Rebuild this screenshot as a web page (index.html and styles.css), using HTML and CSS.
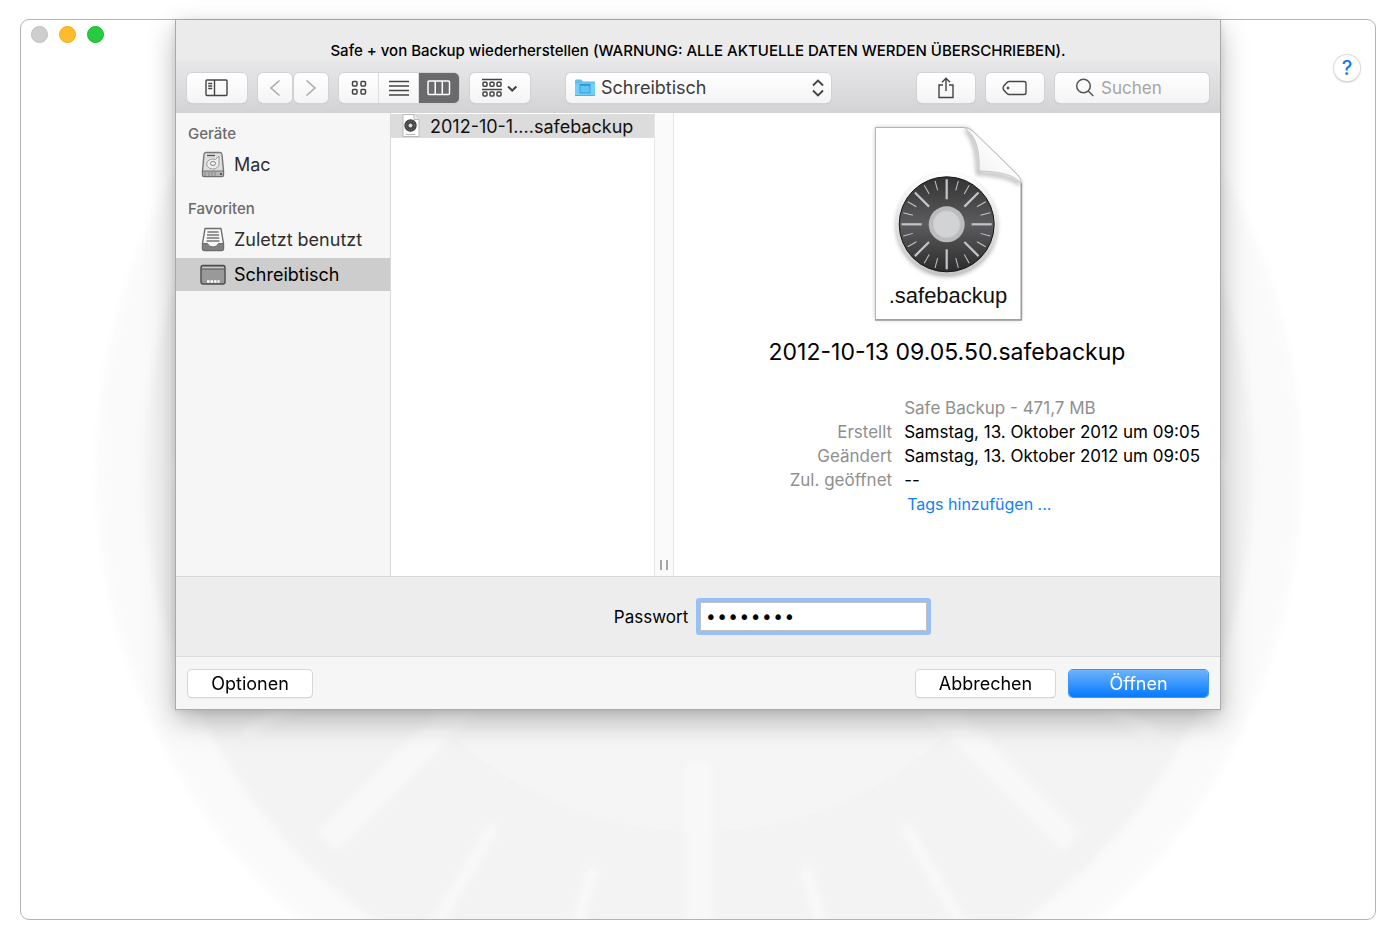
FILE: index.html
```html
<!DOCTYPE html>
<html lang="de">
<head>
<meta charset="utf-8">
<title>Safe +</title>
<link rel="stylesheet" href="styles.css">
</head>
<body>
<svg class="defs" width="0" height="0" aria-hidden="true">
  <defs>
    <linearGradient id="dial" x1="0" y1="0" x2="0" y2="1"><stop offset="0" stop-color="#333"/><stop offset=".5" stop-color="#5c5c5e"/><stop offset="1" stop-color="#2c2c2c"/></linearGradient>
    <linearGradient id="rim" x1="0" y1="0" x2="0" y2="1"><stop offset="0" stop-color="#fff"/><stop offset="1" stop-color="#c4c4c4"/></linearGradient>
    <linearGradient id="curl" x1="0" y1="1" x2=".6" y2=".4"><stop offset="0" stop-color="#c8c8c8"/><stop offset=".5" stop-color="#f4f4f4"/><stop offset="1" stop-color="#fff"/></linearGradient>
    <filter id="soft" x="-20%" y="-20%" width="140%" height="140%"><feGaussianBlur stdDeviation="2"/></filter>
    <filter id="haze" x="-10%" y="-10%" width="120%" height="120%"><feGaussianBlur stdDeviation="4"/></filter>
    <g id="disk-ticks">
      <path id="tick-major" d="M0-45V-25"/>
      <use href="#tick-major" transform="rotate(45)"/><use href="#tick-major" transform="rotate(90)"/><use href="#tick-major" transform="rotate(135)"/>
      <use href="#tick-major" transform="rotate(180)"/><use href="#tick-major" transform="rotate(225)"/><use href="#tick-major" transform="rotate(270)"/><use href="#tick-major" transform="rotate(315)"/>
    </g>
    <g id="minor-pair"><path d="M0-45V-35" transform="rotate(15)"/><path d="M0-45V-35" transform="rotate(30)"/></g>
    <g id="disk-minor">
      <use href="#minor-pair"/><use href="#minor-pair" transform="rotate(45)"/><use href="#minor-pair" transform="rotate(90)"/><use href="#minor-pair" transform="rotate(135)"/>
      <use href="#minor-pair" transform="rotate(180)"/><use href="#minor-pair" transform="rotate(225)"/><use href="#minor-pair" transform="rotate(270)"/><use href="#minor-pair" transform="rotate(315)"/>
    </g>
  </defs>
</svg>

<main class="window">
  <svg class="backdrop" viewBox="0 0 1354 899" preserveAspectRatio="xMidYMid slice" aria-hidden="true">
    <circle cx="678" cy="450" r="602" fill="#fafafa" filter="url(#haze)"/>
    <circle cx="678" cy="450" r="555" fill="#f3f3f3" filter="url(#haze)"/>
    <circle cx="678" cy="450" r="362" fill="#f5f5f5"/>
    <g filter="url(#haze)">
      <g stroke="#f8f8f8" transform="translate(678 450) scale(11.7)">
        <use href="#disk-ticks" stroke-width="2.300"/>
        <use href="#disk-minor" stroke-width="1.100"/>
      </g>
    </g>
  </svg>

  <div class="lights">
    <button class="light light-close" aria-label="Schließen"></button>
    <button class="light light-min" aria-label="Minimieren"></button>
    <button class="light light-max" aria-label="Vergrößern"></button>
  </div>
  <button class="help">?</button>

  <section class="sheet" aria-labelledby="sheet-title">
    <header class="sheet-head">
      <h1 class="sheet-title" id="sheet-title">Safe + von Backup wiederherstellen (WARNUNG: ALLE AKTUELLE DATEN WERDEN ÜBERSCHRIEBEN).</h1>
      <div class="toolbar">
        <div class="tools">
          <button class="tool tool-wide" aria-label="Seitenleiste">
            <svg width="24" height="18" viewBox="0 0 24 18" fill="none" stroke="#444" stroke-width="1.4"><rect x="1" y="1" width="21" height="15.500" rx="1"/><path d="M9.500 1v15.500M3.200 4.500h4M3.200 7h4M3.200 9.500h4"/></svg>
          </button>
          <div class="nav">
            <button class="tool tool-nav" aria-label="Zurück"><svg width="12" height="18" viewBox="0 0 12 18" fill="none" stroke="#aaa" stroke-width="1.600"><path d="M10.500 1.500 2 9l8.500 7.500"/></svg></button>
            <button class="tool tool-nav" aria-label="Vorwärts"><svg width="12" height="18" viewBox="0 0 12 18" fill="none" stroke="#aaa" stroke-width="1.600"><path d="M1.500 1.500 10 9l-8.500 7.500"/></svg></button>
          </div>
          <div class="views">
            <button class="view" aria-label="Symbole"><svg width="16" height="16" viewBox="0 0 16 16" fill="none" stroke="#444" stroke-width="1.500"><rect x="1.500" y="1.500" width="4.500" height="4.500" rx="1"/><rect x="10" y="1.500" width="4.500" height="4.500" rx="1"/><rect x="1.500" y="9.500" width="4.500" height="4.500" rx="1"/><rect x="10" y="9.500" width="4.500" height="4.500" rx="1"/></svg></button>
            <button class="view" aria-label="Liste"><svg width="20" height="16" viewBox="0 0 20 16" stroke="#444" stroke-width="1.500"><path d="M0 1.500h20M0 6h20M0 10.500h20M0 15h20"/></svg></button>
            <button class="view view-on" aria-label="Spalten"><svg width="24" height="16" viewBox="0 0 24 16" fill="none" stroke="#fff" stroke-width="1.500"><rect x="1" y="1" width="21.500" height="13.500" rx="1"/><path d="M8.200 1v13.500M15.300 1v13.500"/></svg></button>
          </div>
          <button class="tool tool-wide" aria-label="Gruppieren">
            <svg width="36" height="20" viewBox="0 0 36 20" fill="none" stroke="#444" stroke-width="1.500"><path d="M0 1.500h20M0 11.500h20"/><g><rect x="1" y="4.300" width="4" height="4" rx="1"/><rect x="8" y="4.300" width="4" height="4" rx="1"/><rect x="15" y="4.300" width="4" height="4" rx="1"/><rect x="1" y="14" width="4" height="4" rx="1"/><rect x="8" y="14" width="4" height="4" rx="1"/><rect x="15" y="14" width="4" height="4" rx="1"/></g><path d="m26 8.500 4.200 4 4.200-4" stroke-width="2"/></svg>
          </button>
        </div>
        <label class="place">
          <svg width="22" height="18" viewBox="0 0 22 18"><path d="M1 2q0-1.500 1.500-1.500H7L9 2.500h11q1 0 1 1V17H1z" fill="#63bdeb"/><path d="M1 4.500h20V16q0 1-1 1H2q-1 0-1-1z" fill="#72cffa"/><path d="M1 16.500h20" stroke="#4fb1e4"/><rect x="6" y="5.500" width="10" height="8.500" fill="#5fc3f4" stroke="#38a0da"/><path d="M6 6h10" stroke="#2e93cd" stroke-width="1.500"/></svg>
          <select class="place-select" aria-label="Ort"><option>Schreibtisch</option></select>
          <svg width="12" height="18" viewBox="0 0 12 18" fill="none" stroke="#444" stroke-width="1.900"><path d="m1 6.500 5-5 5 5M1 11.500l5 5 5-5"/></svg>
        </label>
        <div class="tools tools-end">
          <button class="tool tool-mid" aria-label="Teilen"><svg width="18" height="22" viewBox="0 0 18 22" fill="none" stroke="#444" stroke-width="1.400"><path d="M6 8H2v12.500h14V8h-4M9 14V1.500M5 5.300l4-4 4 4"/></svg></button>
          <button class="tool tool-mid" aria-label="Tags"><svg width="26" height="16" viewBox="0 0 26 16" fill="none" stroke="#444" stroke-width="1.400"><path d="M7 1.500h15q2 0 2 2v9q0 2-2 2H7q-1 0-2-1L1.700 10Q.500 8 1.700 6L5 2.500q1-1 2-1z"/><circle cx="6" cy="8" r="1" fill="#444" stroke-width="1"/></svg></button>
          <label class="search"><svg width="20" height="20" viewBox="0 0 20 20" fill="none" stroke="#555" stroke-width="1.500"><circle cx="8.500" cy="8" r="6.800"/><path d="m13.300 13 5 5"/></svg><input class="search-input" type="search" placeholder="Suchen" aria-label="Suchen"></label>
        </div>
      </div>
    </header>

    <div class="browser">
      <nav class="sidebar">
        <div class="group">
          <h2 class="group-title">Geräte</h2>
          <a class="item" href="#mac">
            <svg width="26" height="28" viewBox="0 0 26 28"><path d="M4 3.500q.2-2 2-2h14q1.800 0 2 2l1.500 16V24q0 1.500-1.500 1.500H4q-1.500 0-1.500-1.500v-4.500z" fill="#dedede" stroke="#777" stroke-width="1.400"/><path d="M2.500 20h21v4q0 1.500-1.500 1.500H4q-1.500 0-1.500-1.500z" fill="#b4b4b4" stroke="#707070"/><path d="M7 4.500h8" stroke="#555" stroke-width="1.300"/><path d="M19 5v7.500a6.200 5 0 1 1-3.500-4z" fill="#eee" stroke="#9a9a9a"/><ellipse cx="13" cy="12.500" rx="2.600" ry="1.900" fill="#fff" stroke="#777"/><path d="M5 21v4M9 21v4M12 21v4M15 21v4" stroke="#888"/><path d="M20 22h2v2h-2z" fill="#555"/></svg>
            <span>Mac</span>
          </a>
        </div>
        <div class="group">
          <h2 class="group-title">Favoriten</h2>
          <a class="item" href="#zuletzt">
            <svg width="26" height="28" viewBox="0 0 26 28"><path d="M5 2.500h16l2.500 15v5q0 2-2 2h-17q-2 0-2-2v-5z" fill="#f6f6f6" stroke="#6d6d6d" stroke-width="1.400" stroke-linejoin="round"/><path d="M7.500 6h11M7 9h12M6.800 12h12.400M6.500 15h13" stroke="#777" stroke-width="1.400"/><path d="M2.500 17.500h5q1.500 3.500 5.500 3.500t5.500-3.500h5v5q0 2-2 2h-17q-2 0-2-2z" fill="#808080" stroke="#6d6d6d"/></svg>
            <span>Zuletzt benutzt</span>
          </a>
          <a class="item item-on" href="#schreibtisch">
            <svg width="26" height="28" viewBox="0 0 26 28"><rect x="1" y="4.500" width="24" height="18.500" rx="2" fill="#999" stroke="#4c4c4c" stroke-width="1.400"/><path d="M2 6h22v2H2z" fill="#c4c4c4"/><path d="M1.500 8h23" stroke="#555"/><path d="M7 20.500h2.500M10.500 20.500h2.500M14 20.500h2.500M17.500 20.500h2" stroke="#fff" stroke-width="2.600"/></svg>
            <span>Schreibtisch</span>
          </a>
        </div>
      </nav>

      <div class="column">
        <button class="file">
          <svg width="18" height="24" viewBox="0 0 18 24"><path d="M1 .500h11l5 5v17H1z" fill="#fff" stroke="#bbb"/><path d="M12 .500v5h5" fill="#eee" stroke="#bbb"/><circle cx="8.500" cy="11.500" r="6.200" fill="#444"/><circle cx="8.500" cy="11.500" r="4.300" fill="none" stroke="#8a8a8a" stroke-dasharray="1 1.500"/><circle cx="8.500" cy="11.500" r="2" fill="#ddd"/><path d="M3.500 20.500h10" stroke="#bbb"/></svg>
          <span>2012-10-1....safebackup</span>
        </button>
      </div>
      <div class="splitter"><span class="grip"></span></div>

      <article class="preview">
        <svg class="doc" width="154" height="202" viewBox="12 8 154 202" role="img">
          <path d="M15 12h91l55 54v139H15z" fill="#888" filter="url(#soft)" opacity=".45"/>
          <path d="M15.500 12.500h89q5 0 9 4l44 43q3.500 4 3.500 9v136H15.500z" fill="#fff" stroke="#b4b4b4"/>
          <path d="M15 205h147M161.500 68v137" stroke="#999" fill="none" stroke-width="1.300"/>
          <path d="M106 15q12 12 12 43 32 2 42 11" fill="none" stroke="#999" stroke-width="4" filter="url(#soft)" opacity=".7"/>
          <path d="M104 12.500q5 .500 9 4l44 43q4 4 4 9-8-12-42-12.500 2-33-15-43.500z" fill="url(#curl)" stroke="#c2c2c2" stroke-width=".8"/>
          <circle cx="86.700" cy="111" r="51" fill="#777" filter="url(#soft)" opacity=".5"/>
          <circle cx="86.700" cy="109.300" r="51.500" fill="url(#rim)"/>
          <circle cx="86.700" cy="109.300" r="47.500" fill="url(#dial)" stroke="#181818"/>
          <g stroke="#c3c5cc" transform="translate(86.700 109.300)"><use href="#disk-ticks" stroke-width="2.200"/><use href="#disk-minor" stroke-width="1"/></g>
          <circle cx="86.700" cy="109.300" r="18" fill="#bcbcbe"/>
          <circle cx="86.700" cy="109.300" r="13.500" fill="#d2d3d5" stroke="#c8c8ca"/>
          <text class="doc-text" x="88" y="188" text-anchor="middle">.safebackup</text>
        </svg>
        <h2 class="file-name">2012-10-13 09.05.50.safebackup</h2>
        <dl class="facts">
          <dd class="kind">Safe Backup - 471,7 MB</dd>
          <dt>Erstellt</dt><dd>Samstag, 13. Oktober 2012 um 09:05</dd>
          <dt>Geändert</dt><dd>Samstag, 13. Oktober 2012 um 09:05</dd>
          <dt>Zul. geöffnet</dt><dd>--</dd>
          <dd class="tags"><a class="tags-link" href="#tags">Tags hinzufügen ...</a></dd>
        </dl>
      </article>
    </div>

    <div class="secret">
      <label class="secret-label" for="pw">Passwort</label>
      <input class="secret-input" id="pw" type="password" value="geheim12">
    </div>

    <footer class="actions">
      <button class="action action-options">Optionen</button>
      <button class="action">Abbrechen</button>
      <button class="action action-main">Öffnen</button>
    </footer>
  </section>
</main>
</body>
</html>
```

FILE: styles.css
```css
* { box-sizing: border-box; }

body {
  margin: 0;
  padding: 19px 20px 20px;
  min-height: 100vh;
  display: flex;
  background: #fff;
  color: #000;
  font-family: Inter, "Liberation Sans", sans-serif;
  font-size: 17px;
}

button, input, select { font: inherit; color: inherit; margin: 0; }
button { padding: 0; border: 0; background: none; }
h1, h2, dl, dd { margin: 0; font-weight: 400; }
a { color: inherit; text-decoration: none; }
svg { flex: none; }
.defs { position: absolute; }

.window {
  position: relative;
  flex: 1;
  border: 1px solid #b4b4b4;
  border-radius: 9px;
  background: #fff;
}

.backdrop {
  position: absolute;
  inset: 0;
  width: 100%;
  height: 100%;
  border-radius: 8px;
}

.lights { position: absolute; top: 6px; left: 10px; display: flex; gap: 11px; }
.light { width: 17px; height: 17px; border-radius: 50%; border: 1px solid; }
.light-close { background: #cecece; border-color: #bdbdbd; }
.light-min { background: #ffbd2e; border-color: #f0aa1e; }
.light-max { background: #28ca42; border-color: #1bb42c; }

.help {
  position: absolute;
  top: 35px;
  right: 15px;
  width: 26px;
  height: 26px;
  border-radius: 50%;
  background: #fff;
  box-shadow: 0 0 0 1px #ddd, 0 1px 2px #999;
  color: #0a7aff;
  font-size: 20px;
  font-weight: 500;
  line-height: 26px;
}

.sheet {
  position: relative;
  margin: 0 154px;
  border: 1px solid #aaa;
  border-top: 0;
  background: #f6f6f6;
  box-shadow: 0 10px 26px rgba(0, 0, 0, .28), 0 1px 8px rgba(0, 0, 0, .1);
}

.sheet-head { background: linear-gradient(#ebebeb 0, #ebebeb 40px, #e7e6e8 42px, #d3d2d4 100%); }

.sheet-title {
  padding: 20px 0 0;
  line-height: 22px;
  font-size: 15px;
  font-weight: 500;
  text-align: center;
}

.toolbar { display: flex; align-items: center; padding: 10px 11px; }
.tools { display: flex; gap: 11px; }
.tools-end { margin-left: auto; }

.tool, .view, .place, .search {
  display: flex;
  align-items: center;
  justify-content: center;
  height: 30px;
  background: linear-gradient(#fff, #f4f4f4);
}

.toolbar { min-height: 51px; }

.tool, .views, .place, .search {
  border-radius: 5px;
  box-shadow: 0 0 0 1px #d2d2d4, 0 1px 1px #aaa;
}

.tool-wide { width: 60px; }
.tool-mid { width: 58px; }
.tool-nav { width: 34px; }
.nav { display: flex; gap: 2px; }
.views { display: flex; overflow: hidden; }
.view { width: 40px; border-right: 1px solid #ddd; }
.view-on { border: 0; background: #6a6a6c; }

.place { flex: 0 1 265px; margin: 0 24px 0 36px; padding: 0 7px 0 8px; color: #3c3c3c; }
.place-select { flex: 1; min-width: 0; padding: 0 5px; border: 0; background: none; appearance: none; font-size: 18px; }
.search { width: 154px; padding-left: 20px; gap: 6px; }
.search-input { flex: 1; min-width: 0; padding: 0; border: 0; background: none; outline: 0; appearance: none; }
.search-input::placeholder { color: #a5a5a5; opacity: 1; }

.browser { display: flex; min-height: 463px; background: #fff; }

.sidebar { flex: 0 0 215px; padding-top: 9px; border-right: 1px solid #d9d9d9; background: #f6f6f6; }
.group { display: flex; flex-direction: column; gap: 2px; margin-bottom: 16px; }
.group-title { padding-left: 12px; color: #6b6b6b; font-size: 15px; font-weight: 500; line-height: 24px; }
.item { display: flex; align-items: center; gap: 8px; height: 33px; padding-left: 24px; color: #2e2e2e; font-size: 18px; }
.item-on { background: #cdcdcd; color: #000; }

.column { flex: 0 0 263px; padding-top: 1px; }
.file { display: flex; align-items: center; gap: 10px; width: 100%; height: 24px; padding-left: 11px; background: #dcdcdc; color: #111; font-size: 18px; }

.splitter { flex: 0 0 20px; display: flex; align-items: flex-end; justify-content: center; padding-bottom: 6px; border: solid #e6e6e6; border-width: 0 1px; background: #fafafa; }
.grip { width: 8px; height: 10px; border: solid #a5a5a5; border-width: 0 2px; }

.preview { flex: 1; min-width: 0; display: flex; flex-direction: column; align-items: center; padding: 10px 20px 0; }
.doc { margin-left: 4px; }
.doc-text { font-family: "Liberation Sans", sans-serif; font-size: 22px; fill: #111; }
.file-name { margin-top: 12px; font-size: 23px; line-height: 30px; }
.facts { align-self: stretch; display: grid; grid-template-columns: 1fr auto; column-gap: 12px; margin-top: 29px; line-height: 24px; }
.facts dt { color: #8f8f8f; text-align: right; }
.facts dd { grid-column: 2; }
.facts .kind { color: #8f8f8f; }
.tags-link { padding-left: 3px; color: #157efb; font-size: 16px; }

.secret { display: flex; align-items: center; justify-content: center; gap: 12px; height: 81px; padding-left: 145px; border-top: 1px solid #d8d8d8; border-bottom: 1px solid #dcdcdc; background: #ededed; }
.secret-input { width: 227px; height: 29px; padding: 0 4px; border: 1px solid #c0c0c0; background: #fff; outline: 0; box-shadow: 0 0 0 4px #97c1f6; font-family: "DejaVu Sans", sans-serif; font-size: 19px; border-radius: 1px; }

.actions { display: flex; gap: 14px; padding: 13px 12px 12px; }
.action { width: 139px; height: 27px; border-radius: 4px; background: #fff; box-shadow: 0 0 0 1px #d6d6d6, 0 1px 1px #aaa; font-size: 18px; line-height: 27px; }
.action-options { width: 124px; margin-right: auto; }
.action-main { background: linear-gradient(#6cb3fa, #067aff); box-shadow: 0 0 0 1px #3f95f5; color: #fff; }
```
